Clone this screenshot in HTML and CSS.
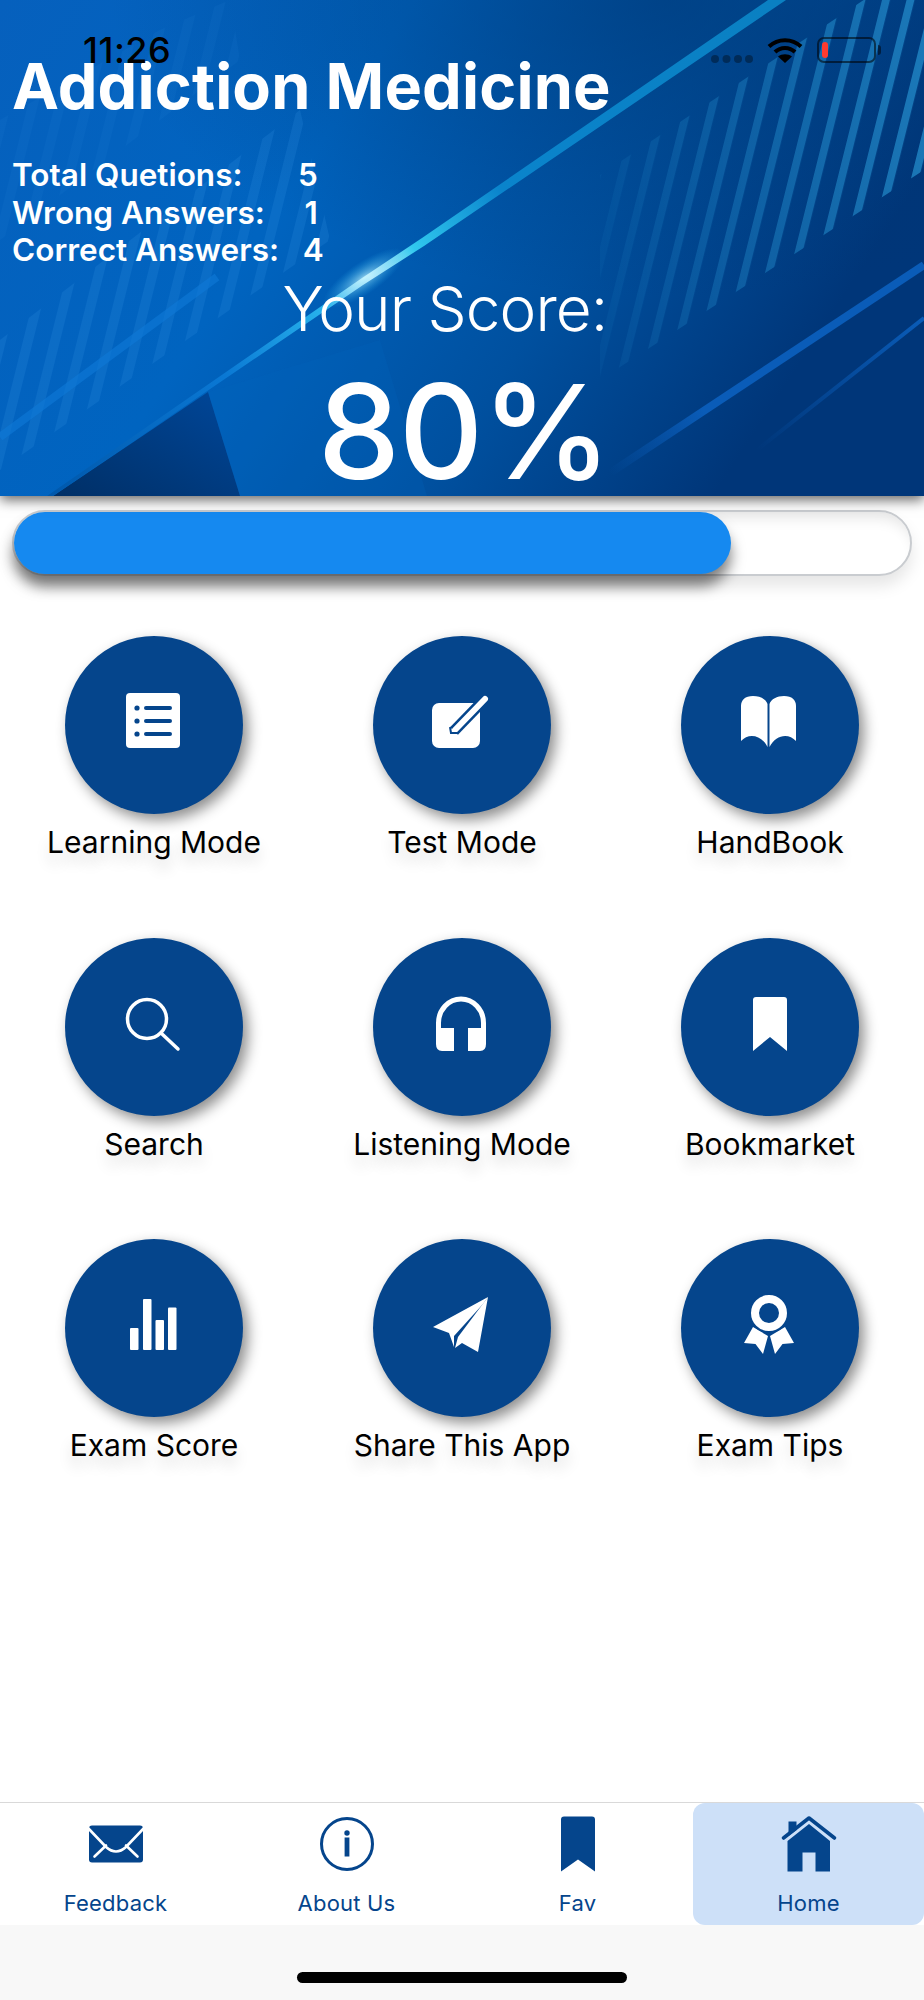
FILE: index.html
```html
<!DOCTYPE html>
<html lang="en">
<head>
  <meta charset="UTF-8" />
  <meta name="viewport" content="width=device-width, initial-scale=1.0" />
  <title>Addiction Medicine</title>
  <link rel="stylesheet" href="styles.css">
</head>
<body>
<div class="page">

  <header class="hero">
    <svg class="hero-bg" viewBox="0 0 924 496" preserveAspectRatio="none" aria-hidden="true">
      <defs>
        <linearGradient id="baseBlue" x1="0" y1="0" x2="1" y2="0.35">
          <stop offset="0" stop-color="#0660bd"/>
          <stop offset="0.4" stop-color="#0064c0"/>
          <stop offset="0.72" stop-color="#00509f"/>
          <stop offset="1" stop-color="#003679"/>
        </linearGradient>
        <radialGradient id="topShade" cx="0.72" cy="0" r="0.6">
          <stop offset="0" stop-color="#00346f" stop-opacity="0.55"/>
          <stop offset="1" stop-color="#00346f" stop-opacity="0"/>
        </radialGradient>
        <linearGradient id="cornerDark" x1="0" y1="1" x2="1" y2="0">
          <stop offset="0" stop-color="#002f66"/>
          <stop offset="1" stop-color="#00479a"/>
        </linearGradient>
        <linearGradient id="beam" gradientUnits="userSpaceOnUse" x1="774" y1="0" x2="53" y2="496">
          <stop offset="0" stop-color="#0a80c2"/>
          <stop offset="0.38" stop-color="#0a84cc"/>
          <stop offset="0.5" stop-color="#30c8ee"/>
          <stop offset="0.56" stop-color="#e8fbff"/>
          <stop offset="0.62" stop-color="#28b4ec"/>
          <stop offset="0.76" stop-color="#0a78d4"/>
          <stop offset="1" stop-color="#0058ac"/>
        </linearGradient>
        <linearGradient id="bandFade" gradientUnits="userSpaceOnUse" x1="924" y1="265" x2="610" y2="473">
          <stop offset="0" stop-color="#0a5cb8"/>
          <stop offset="0.7" stop-color="#0a5cb8"/>
          <stop offset="1" stop-color="#0a5cb8" stop-opacity="0"/>
        </linearGradient>
        <linearGradient id="bandThin" gradientUnits="userSpaceOnUse" x1="924" y1="318" x2="757" y2="450">
          <stop offset="0" stop-color="#0a5cb8"/>
          <stop offset="1" stop-color="#0a5cb8" stop-opacity="0"/>
        </linearGradient>
        <radialGradient id="glare">
          <stop offset="0" stop-color="#bdf3ff" stop-opacity="0.75"/>
          <stop offset="1" stop-color="#20b0f0" stop-opacity="0"/>
        </radialGradient>
        <pattern id="streaks" width="24.5" height="10" patternUnits="userSpaceOnUse" patternTransform="skewX(-14)">
          <rect width="8" height="10" fill="#2a9ad8"/>
        </pattern>
        <pattern id="streaksLeft" width="27" height="10" patternUnits="userSpaceOnUse" patternTransform="skewX(-14)">
          <rect width="10" height="10" fill="#3a98e8"/>
        </pattern>
        <linearGradient id="fadeRight" x1="0" y1="0" x2="1" y2="0">
          <stop offset="0" stop-color="#000"/>
          <stop offset="0.45" stop-color="#777"/>
          <stop offset="1" stop-color="#fff"/>
        </linearGradient>
        <mask id="fadeMask" maskUnits="userSpaceOnUse" x="560" y="0" width="364" height="400">
          <rect x="560" y="0" width="364" height="400" fill="url(#fadeRight)"/>
        </mask>
      </defs>
      <rect width="924" height="496" fill="url(#baseBlue)"/>
      <rect width="924" height="496" fill="url(#topShade)"/>
      <polygon points="208,392 53,496 240,496" fill="url(#cornerDark)"/>
      <polygon points="208,392 240,496 427,496 380,340" fill="#0063bb" opacity="0.25"/>
      <polygon points="0,340 300,110 330,240 0,470" fill="url(#streaksLeft)" opacity="0.18"/>
      <polygon points="0,120 160,30 230,0 240,60 0,240" fill="url(#streaksLeft)" opacity="0.07"/>
      <polygon points="600,175 924,-40 924,170 600,380" fill="url(#streaks)" opacity="0.65" mask="url(#fadeMask)"/>
      <path d="M0 437 L217 277" stroke="#0f7ad8" stroke-width="8" opacity="0.6"/>
      <path d="M924 265 L610 473" stroke="url(#bandFade)" stroke-width="8" fill="none"/>
      <path d="M924 318 L757 450" stroke="url(#bandThin)" stroke-width="4" fill="none"/>
      <polygon points="768,0 786,0 424,246 363,285 53,496 47,496 362,278 422,238" fill="url(#beam)"/>
      <ellipse cx="364" cy="278" rx="48" ry="16" transform="rotate(-34 364 278)" fill="url(#glare)"/>
    </svg>

    <div class="statusbar">
      <span class="clock">11:26</span>
      <div class="status-icons">
        <svg class="signal" width="42" height="10" viewBox="0 0 42 10">
          <circle cx="4" cy="5" r="4"/><circle cx="15.5" cy="5" r="4"/><circle cx="27" cy="5" r="4"/><circle cx="38" cy="5" r="4"/>
        </svg>
        <svg class="wifi" width="36" height="26" viewBox="0 0 36 26">
          <path d="M2 9.5 C11 1 25 1 34 9.5" fill="none" stroke="#000" stroke-width="4"/>
          <path d="M8 15 C13.5 9.5 22.5 9.5 28 15" fill="none" stroke="#000" stroke-width="4"/>
          <path d="M18 26 L11 19.5 C15 16.5 21 16.5 25 19.5 Z" fill="#000"/>
        </svg>
        <div class="battery"><span class="battery-level"></span></div>
      </div>
    </div>

    <div class="hero-text">
      <h1>Addiction Medicine</h1>
      <div class="stats">
        <div class="stat">Total Quetions:       5</div>
        <div class="stat">Wrong Answers:     1</div>
        <div class="stat">Correct Answers:   4</div>
      </div>
      <div class="score-label">Your Score:</div>
      <div class="score-value">80%</div>
    </div>
  </header>

  <div class="progress">
    <div class="progress-fill" style="width: 80%"></div>
  </div>

  <main class="menu">
    <a class="menu-item">
      <span class="menu-circle">
        <svg viewBox="-45 -45 90 90" width="90" height="90">
          <rect x="-28" y="-32" width="54" height="55" rx="4" fill="#fff"/>
          <g stroke="#05458c" stroke-width="4" stroke-linecap="round">
            <path d="M-8 -17 H16 M-8 -4 H16 M-8 9 H16"/>
          </g>
          <g fill="#05458c"><circle cx="-17" cy="-17" r="2.6"/><circle cx="-17" cy="-4" r="2.6"/><circle cx="-17" cy="9" r="2.6"/></g>
        </svg>
      </span>
      <span class="menu-label">Learning Mode</span>
    </a>
    <a class="menu-item">
      <span class="menu-circle">
        <svg viewBox="-45 -45 90 90" width="90" height="90">
          <rect x="-30" y="-22" width="48" height="45" rx="7" fill="#fff"/>
          <path d="M-8 6 L22 -25" stroke="#05458c" stroke-width="11" fill="none"/>
          <path d="M-7 5 L23 -26" stroke="#fff" stroke-width="6" stroke-linecap="round" fill="none"/>
          <path d="M-12 2 L-11 8 L-5 8" stroke="#05458c" stroke-width="2" fill="none"/>
        </svg>
      </span>
      <span class="menu-label">Test Mode</span>
    </a>
    <a class="menu-item">
      <span class="menu-circle">
        <svg viewBox="-45 -45 90 90" width="90" height="90">
          <path fill="#fff" d="M-2.5 -21 C-4 -26 -10 -29 -17 -29 C-25 -29 -29 -25 -29 -19 V16 C-22 8 -9 9 -2.5 22 Z"/>
          <path fill="#fff" d="M-0.5 -21 C1 -26 7 -29 14 -29 C22 -29 26 -25 26 -19 V16 C19 8 6 9 -0.5 22 Z"/>
        </svg>
      </span>
      <span class="menu-label">HandBook</span>
    </a>
    <a class="menu-item">
      <span class="menu-circle">
        <svg viewBox="-45 -45 90 90" width="90" height="90">
          <circle cx="-7" cy="-8" r="19.5" fill="none" stroke="#fff" stroke-width="3.5"/>
          <path d="M7 6 L24 22" stroke="#fff" stroke-width="3.5" stroke-linecap="round"/>
        </svg>
      </span>
      <span class="menu-label">Search</span>
    </a>
    <a class="menu-item">
      <span class="menu-circle">
        <svg viewBox="-45 -45 90 90" width="90" height="90">
          <path d="M-23.5 3 V-4 A22.5 24 0 0 1 21.5 -4 V3" fill="none" stroke="#fff" stroke-width="5"/>
          <path fill="#fff" d="M-26 1 H-8 V24 H-20 Q-26 24 -26 17 Z"/>
          <path fill="#fff" d="M24 1 H6 V24 H18 Q24 24 24 17 Z"/>
        </svg>
      </span>
      <span class="menu-label">Listening Mode</span>
    </a>
    <a class="menu-item">
      <span class="menu-circle">
        <svg viewBox="-45 -45 90 90" width="90" height="90">
          <path fill="#fff" d="M-14 -30 H14 Q17 -30 17 -27 V24 L0 10 L-17 24 V-27 Q-17 -30 -14 -30 Z"/>
        </svg>
      </span>
      <span class="menu-label">Bookmarket</span>
    </a>
    <a class="menu-item">
      <span class="menu-circle">
        <svg viewBox="-45 -45 90 90" width="90" height="90">
          <g fill="#fff">
            <rect x="-24" y="0" width="8.5" height="22" rx="1"/>
            <rect x="-11" y="-29" width="8.5" height="51" rx="1"/>
            <rect x="1.5" y="-8" width="8.5" height="30" rx="1"/>
            <rect x="14" y="-20.5" width="8.5" height="42.5" rx="1"/>
          </g>
        </svg>
      </span>
      <span class="menu-label">Exam Score</span>
    </a>
    <a class="menu-item">
      <span class="menu-circle">
        <svg viewBox="-45 -45 90 90" width="90" height="90">
          <path fill="#fff" d="M26 -31 L-29 -1 L-13 5 L-8 19 L-8 8 L21 -24 Z"/>
          <path fill="#fff" d="M26 -31 L-4 9 L-7 20 L0 15 L16 24 Z"/>
        </svg>
      </span>
      <span class="menu-label">Share This App</span>
    </a>
    <a class="menu-item">
      <span class="menu-circle">
        <svg viewBox="-45 -45 90 90" width="90" height="90">
          <path fill="#fff" d="M-17 -1 L-26 15 L-14.5 16 L-7 26 L-2 8 Z"/>
          <path fill="#fff" d="M15 -1 L24 15 L12.5 16 L5 26 L0 8 Z"/>
          <circle cx="-1" cy="-15" r="20" fill="#05458c"/>
          <circle cx="-1" cy="-15" r="14" fill="none" stroke="#fff" stroke-width="8"/>
        </svg>
      </span>
      <span class="menu-label">Exam Tips</span>
    </a>
  </main>

  <nav class="tabbar">
    <a class="tab">
      <svg viewBox="-30 -29 60 58" width="60" height="58">
        <rect x="-27" y="-18.5" width="54" height="37" rx="3" fill="#05458c"/>
        <g fill="none" stroke="#fff" stroke-width="2.6" stroke-linecap="round">
          <path d="M-28 -16 L-10 3 Q0 12 10 3 L28 -16"/>
          <path d="M-21.5 12.5 L-10 1.5 M21.5 12.5 L10 1.5"/>
        </g>
      </svg>
      <span>Feedback</span>
    </a>
    <a class="tab">
      <svg viewBox="-30 -29 60 58" width="60" height="58">
        <circle r="25.5" fill="none" stroke="#05458c" stroke-width="3"/>
        <circle cy="-11" r="2.7" fill="#05458c"/>
        <rect x="-2.4" y="-6.5" width="4.8" height="19" fill="#05458c"/>
      </svg>
      <span>About Us</span>
    </a>
    <a class="tab">
      <svg viewBox="-30 -29 60 58" width="60" height="58">
        <path fill="#05458c" d="M-14 -27.5 H14 Q17 -27.5 17 -24.5 V27.5 L0 15.5 L-17 27.5 V-24.5 Q-17 -27.5 -14 -27.5 Z"/>
      </svg>
      <span>Fav</span>
    </a>
    <a class="tab tab-active">
      <svg viewBox="-30 -29 60 58" width="60" height="58">
        <path fill="#05458c" d="M-20.5 -22.5 H-12.5 V-14 L-20.5 -8 Z"/>
        <path fill="none" stroke="#05458c" stroke-width="3.6" stroke-linecap="round" stroke-linejoin="round" d="M-25.5 -6 L0 -26 L25.5 -6"/>
        <path fill="#05458c" d="M0 -20 L21 -3 V27.5 H6.5 V8.5 H-6.5 V27.5 H-21.5 V-3 Z"/>
      </svg>
      <span>Home</span>
    </a>
  </nav>

  <div class="home-area"><span class="home-indicator"></span></div>
</div>
</body>
</html>
```

FILE: styles.css
```css
body {
  margin: 0;
  font-family: Inter, 'Noto Sans', sans-serif;
  background: #fff;
}

.page {
  width: 924px;
  height: 2000px;
  display: flex;
  flex-direction: column;
  overflow: hidden;
}

/* top banner */
.hero {
  position: relative;
  z-index: 2;
  height: 496px;
  flex: none;
  color: #fff;
  background: #0060b8;
  box-shadow: 0 4px 12px rgba(0,0,0,0.6);
}

.hero-bg {
  position: absolute;
  left: 0;
  top: 0;
  width: 100%;
  height: 100%;
}

.hero-text {
  position: relative;
  padding: 48px 0 0 12px;
}

h1 {
  margin: 0;
  font-size: 63px;
  line-height: 76px;
  font-weight: 700;
  letter-spacing: 0.15px;
}

.stats {
  margin-top: 32px;
  font-size: 31.5px;
  line-height: 37.5px;
  font-weight: 600;
}

.stat {
  white-space: pre;
}

.score-label {
  margin-top: 2px;
  padding-right: 46px;
  text-align: center;
  font-size: 62px;
  line-height: 76px;
  font-weight: 300;
  letter-spacing: -0.9px;
}

.score-value {
  margin-top: 20px;
  padding-right: 8px;
  text-align: center;
  font-size: 131px;
  line-height: 130px;
  font-weight: 500;
  letter-spacing: -1.5px;
}

/* status bar sits over the banner */
.statusbar {
  position: absolute;
  z-index: 3;
  left: 0;
  right: 0;
  top: 37px;
  height: 26px;
  padding: 0 48px 0 83px;
  display: flex;
  justify-content: space-between;
  align-items: center;
}

.clock {
  color: #000;
  font-size: 36px;
  line-height: 26px;
  font-weight: 500;
  letter-spacing: 0.5px;
}

.status-icons {
  display: flex;
  align-items: center;
}

.signal {
  fill: rgba(0,0,0,0.35);
  margin: 18px 14px 0 0;
}

.wifi {
  margin-right: 14px;
}

.battery {
  position: relative;
  width: 49px;
  height: 22px;
  border: 2px solid rgba(0,0,0,0.55);
  border-radius: 7px;
  padding: 0 3px;
  display: flex;
  align-items: center;
}

.battery::after {
  content: "";
  position: absolute;
  right: -7px;
  top: 6px;
  width: 3px;
  height: 10px;
  border-radius: 0 4px 4px 0;
  background: rgba(0,0,0,0.5);
}

.battery-level {
  display: block;
  width: 6px;
  height: 16px;
  border-radius: 3px;
  background: #ff3b30;
}

/* score bar */
.progress {
  flex: none;
  height: 62px;
  margin: 14px 12px 0;
  border: 2px solid #c9ccd0;
  border-radius: 33px;
  background: #fff;
  box-shadow: 0 10px 16px rgba(0,0,0,0.1), inset 0 14px 14px -8px rgba(0,0,0,0.1);
}

.progress-fill {
  height: 100%;
  border-radius: 31px;
  background: #1589f0;
  box-shadow: 0 12px 14px rgba(0,0,0,0.5);
}

/* menu grid */
.menu {
  flex: 1;
  display: grid;
  grid-template-columns: repeat(3, 1fr);
  grid-auto-rows: 301.5px;
  padding-top: 60px;
}

.menu-item {
  display: flex;
  flex-direction: column;
  align-items: center;
}

.menu-circle {
  width: 178px;
  height: 178px;
  border-radius: 50%;
  background: #05458c;
  box-shadow: 5px 6px 14px rgba(0,0,0,0.45);
  display: flex;
  align-items: center;
  justify-content: center;
}

.menu-label {
  margin-top: 10px;
  color: #000;
  font-size: 30px;
  line-height: 36px;
  text-shadow: 0 10px 14px rgba(0,0,0,0.15);
}

/* bottom tabs */
.tabbar {
  flex: none;
  height: 122px;
  border-top: 1px solid #d9d9d9;
  background: #fff;
  display: grid;
  grid-template-columns: repeat(4, 1fr);
}

.tab {
  padding-top: 12px;
  display: flex;
  flex-direction: column;
  align-items: center;
  color: #05458c;
  font-size: 22px;
  line-height: 26px;
  letter-spacing: 0.2px;
}

.tab span {
  margin-top: 17px;
}

.tab-active {
  background: #cde0f8;
  border-radius: 12px;
}

.home-area {
  flex: none;
  height: 75px;
  background: #f8f8f8;
  display: flex;
  justify-content: center;
  padding-top: 47px;
  box-sizing: border-box;
}

.home-indicator {
  width: 330px;
  height: 11px;
  border-radius: 6px;
  background: #000;
}
```
